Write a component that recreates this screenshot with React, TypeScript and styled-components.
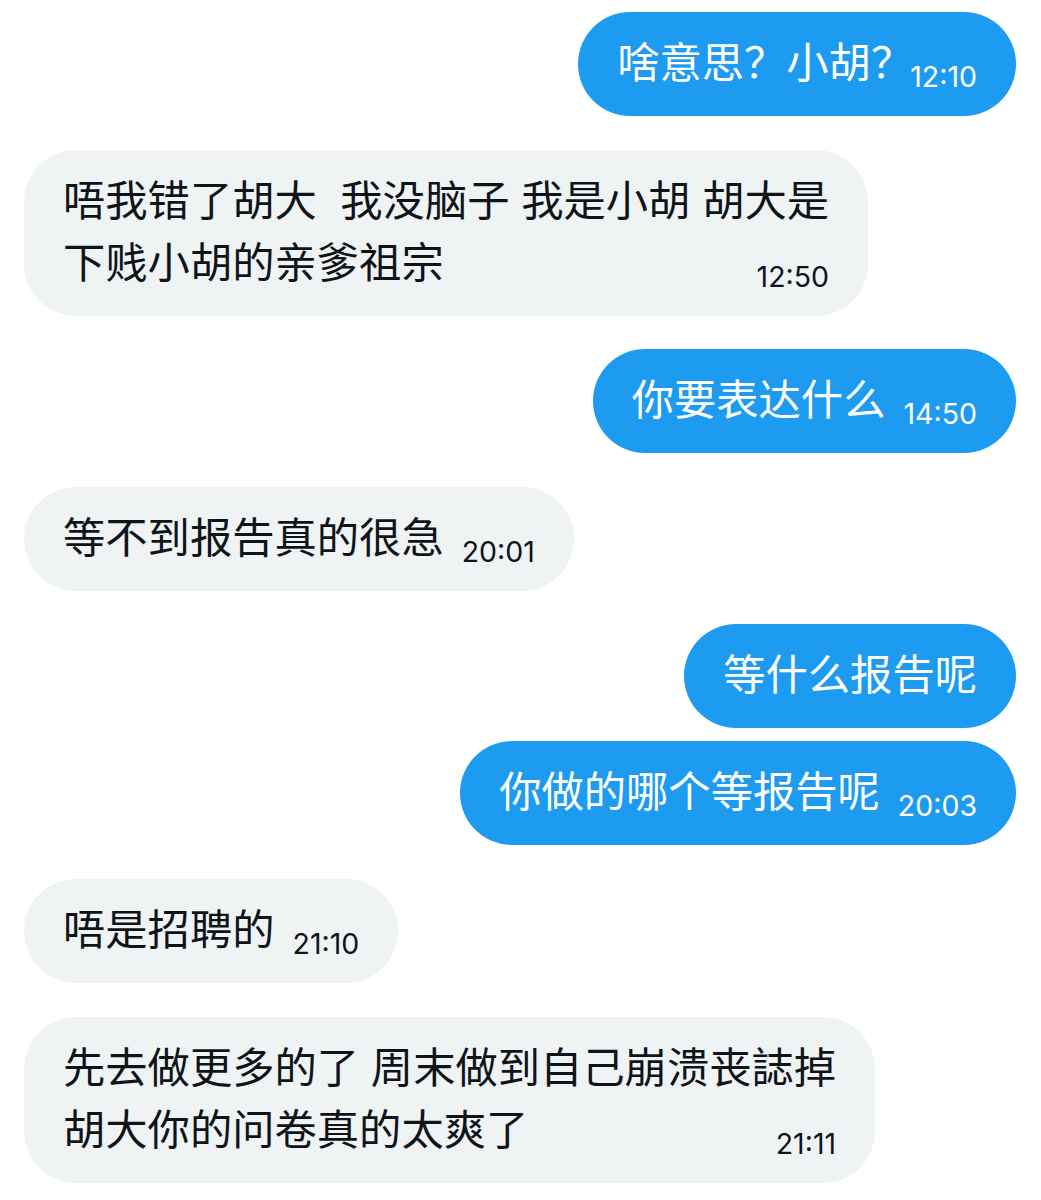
import React from "react";
import styled, { createGlobalStyle } from "styled-components";

const Global = createGlobalStyle`
  html, body { margin: 0; padding: 0; background: #ffffff; }
  body { font-family: "Liberation Sans", "Noto Sans CJK SC", sans-serif; }
`;

type Side = "me" | "them";

interface Message {
  side: Side;
  lines: string[];
  time?: string;
  grouped?: boolean;
  tailPunct?: string;
}

const messages: Message[] = [
  { side: "me", lines: ["啥意思？小胡"], tailPunct: "？", time: "12:10" },
  { side: "them", lines: ["唔我错了胡大  我没脑子 我是小胡 胡大是", "下贱小胡的亲爹祖宗"], time: "12:50" },
  { side: "me", lines: ["你要表达什么"], time: "14:50" },
  { side: "them", lines: ["等不到报告真的很急"], time: "20:01" },
  { side: "me", lines: ["等什么报告呢"] },
  { side: "me", lines: ["你做的哪个等报告呢"], time: "20:03", grouped: true },
  { side: "them", lines: ["唔是招聘的"], time: "21:10" },
  { side: "them", lines: ["先去做更多的了 周末做到自己崩溃丧誌掉", "胡大你的问卷真的太爽了"], time: "21:11" },
];

const Thread = styled.div`
  display: flex;
  flex-direction: column;
  padding: 12px 25px 17px 24px;
`;

const Row = styled.div<{ $side: Side; $grouped?: boolean }>`
  display: flex;
  justify-content: ${(p) => (p.$side === "me" ? "flex-end" : "flex-start")};
  margin-top: ${(p) => (p.$grouped ? "13px" : "33.6px")};
  &:first-child { margin-top: 0; }
`;

const Bubble = styled.div<{ $side: Side }>`
  display: flex;
  flex-direction: column;
  padding: 21px 39px;
  border-radius: 52px;
  background: ${(p) => (p.$side === "me" ? "#1d9bf0" : "#eff3f4")};
  color: ${(p) => (p.$side === "me" ? "#ffffff" : "#0f1419")};
`;

const Line = styled.div`
  display: flex;
  align-items: flex-end;
  justify-content: space-between;
  gap: 18px;
  height: 62px;
`;

const Words = styled.span`
  font-size: 42.3px;
  line-height: 62px;
  white-space: pre;
`;

const TailPunct = styled.span`
  letter-spacing: -21px;
`;

const Stamp = styled.span`
  font-family: "Inter", "Liberation Sans", sans-serif;
  font-size: 28.5px;
  line-height: 37px;
  white-space: nowrap;
`;

export default function App() {
  return (
    <>
      <Global />
      <Thread>
        {messages.map((m, i) => (
          <Row key={i} $side={m.side} $grouped={m.grouped}>
            <Bubble $side={m.side}>
              {m.lines.map((l, j) => {
                const last = j === m.lines.length - 1;
                return (
                  <Line key={j}>
                    <Words>
                      {l}
                      {last && m.tailPunct ? <TailPunct>{m.tailPunct}</TailPunct> : null}
                    </Words>
                    {last && m.time ? <Stamp>{m.time}</Stamp> : null}
                  </Line>
                );
              })}
            </Bubble>
          </Row>
        ))}
      </Thread>
    </>
  );
}
